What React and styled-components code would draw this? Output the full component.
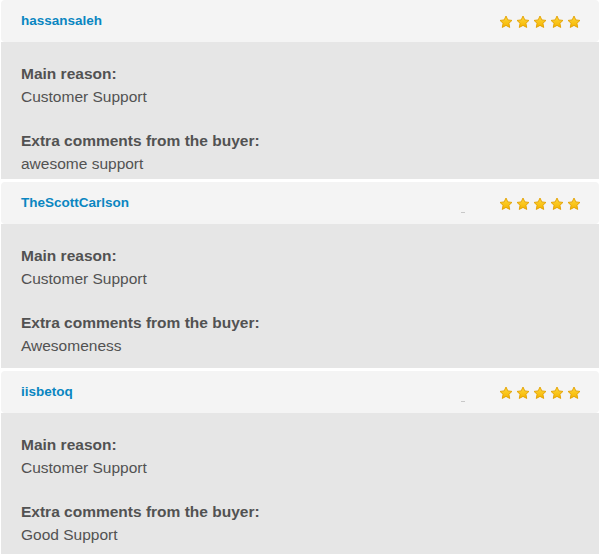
import styled, { createGlobalStyle } from 'styled-components';

const GlobalStyle = createGlobalStyle`
  html, body {
    margin: 0;
    padding: 0;
    background: #ffffff;
    font-family: "Liberation Sans", Arial, sans-serif;
  }
`;

const reviews = [
  { user: 'hassansaleh', reason: 'Customer Support', comment: 'awesome support', tail: 4, dash: false },
  { user: 'TheScottCarlson', reason: 'Customer Support', comment: 'Awesomeness', tail: 11, dash: true },
  { user: 'iisbetoq', reason: 'Customer Support', comment: 'Good Support', tail: 11, dash: true },
];

const List = styled.div`
  display: flex;
  flex-direction: column;
  gap: 3px;
  margin: 0 1px;
`;

const Card = styled.div`
  display: flex;
  flex-direction: column;
`;

const Header = styled.div`
  position: relative;
  height: 42px;
  display: flex;
  align-items: center;
  justify-content: space-between;
  padding: 0 18px 2px 20px;
  box-sizing: border-box;
  background: #f4f4f4;
  border-radius: 4px;
`;

const User = styled.a`
  color: #0a86c1;
  font-size: 13.5px;
  font-weight: 700;
  text-decoration: none;
`;

const Dash = styled.span`
  position: absolute;
  left: 460px;
  top: 30px;
  width: 4px;
  height: 1px;
  background: #c8c8c8;
`;

const Stars = styled.div`
  display: flex;
  gap: 3px;
  margin-top: 3px;
`;

const Body = styled.div`
  background: #e6e6e6;
  padding: 20px 20px ${({ $tail }) => $tail}px 20px;
  color: #525252;
  font-size: 15.5px;
  line-height: 23px;
`;

const Label = styled.div`
  font-weight: 700;
`;

const Value = styled.div`
  margin-bottom: ${({ $last }) => ($last ? 0 : 21)}px;
`;

const Star = () => (
  <svg width="14" height="14" viewBox="0 0 24 24">
    <defs>
      <linearGradient id="sg" x1="0" y1="0" x2="0" y2="1">
        <stop offset="0" stopColor="#ffd93a" />
        <stop offset="1" stopColor="#f5b400" />
      </linearGradient>
    </defs>
    <path
      d="M12 1.8l3.1 6.6 7.1.9-5.2 4.9 1.4 7.1L12 17.8l-6.4 3.5 1.4-7.1-5.2-4.9 7.1-.9z"
      fill="url(#sg)"
      stroke="#e3a000"
      strokeWidth="1.6"
      strokeLinejoin="round"
    />
  </svg>
);

const Review = ({ user, reason, comment, tail, dash }) => (
  <Card>
    <Header>
      <User href="#">{user}</User>
      {dash && <Dash />}
      <Stars>
        {[0, 1, 2, 3, 4].map((i) => (
          <Star key={i} />
        ))}
      </Stars>
    </Header>
    <Body $tail={tail}>
      <Label>Main reason:</Label>
      <Value>{reason}</Value>
      <Label>Extra comments from the buyer:</Label>
      <Value $last>{comment}</Value>
    </Body>
  </Card>
);

export default function App() {
  return (
    <>
      <GlobalStyle />
      <List>
        {reviews.map((r) => (
          <Review key={r.user} {...r} />
        ))}
      </List>
    </>
  );
}
